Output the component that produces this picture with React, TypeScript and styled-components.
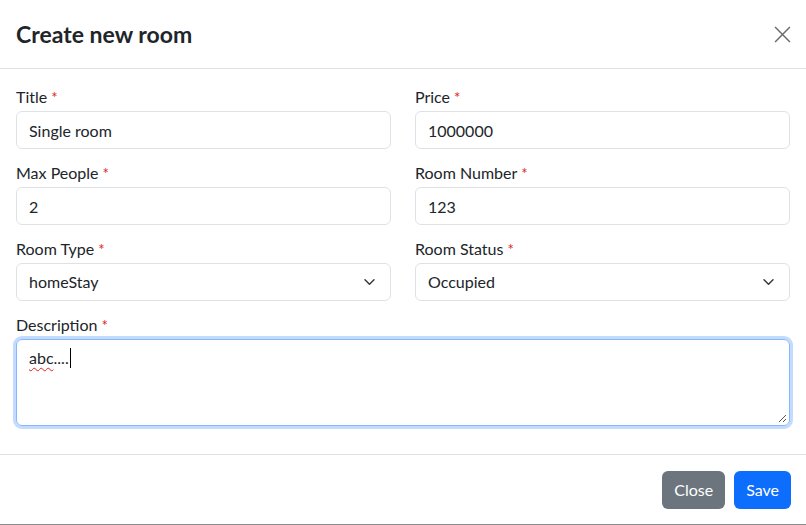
import React from "react";
import styled, { createGlobalStyle } from "styled-components";

const Global = createGlobalStyle`
  html, body { margin: 0; padding: 0; background: #fff; }
  body { font-family: Lato, "Open Sans", "Liberation Sans", sans-serif; color: #212529; }
  * { box-sizing: border-box; }
`;

const Modal = styled.div`
  width: 806px;
  height: 525px;
  background: #fff;
  border-bottom: 1px solid #8c8c8c;
  display: flex;
  flex-direction: column;
`;

const Header = styled.div`
  height: 69px;
  flex: none;
  padding: 0 15px 0 16px;
  border-bottom: 1px solid #dee2e6;
  display: flex;
  align-items: center;
  justify-content: space-between;
`;

const Title = styled.h5`
  margin: 0;
  font-size: 23px;
  font-weight: 700;
  line-height: 1.5;
  color: #212529;
  padding-top: 1px;
`;

const CloseX = styled.button`
  width: 18px;
  height: 18px;
  border: 0;
  background: transparent;
  padding: 0;
  display: flex;
  align-items: center;
  justify-content: center;
  cursor: pointer;
  margin-top: 1px;
`;

const Body = styled.div`
  flex: none;
  padding: 16px 16px 0 16px;
  display: grid;
  grid-template-columns: 1fr 1fr;
  align-content: start;
  column-gap: 24px;
  row-gap: 12px;
  height: 386px;
  border-bottom: 1px solid #dee2e6;
`;

const Group = styled.div<{ $full?: boolean }>`
  display: flex;
  flex-direction: column;
  grid-column: ${(p) => (p.$full ? "1 / -1" : "auto")};
`;

const Label = styled.label`
  font-size: 16px;
  line-height: 24px;
  margin-bottom: 2px;
  color: #212529;
`;

const Req = styled.span`
  color: #e02020;
  font-size: 15px;
  margin-left: 4px;
`;

const Input = styled.input`
  height: 38px;
  padding: 6px 12px;
  border: 1px solid #dee2e6;
  border-radius: 6px;
  font-family: inherit;
  font-size: 16px;
  color: #212529;
  background: #fff;
  outline: none;
`;

const SelectBox = styled.div`
  position: relative;
  height: 38px;
  padding: 6px 36px 6px 12px;
  border: 1px solid #dee2e6;
  border-radius: 6px;
  font-size: 16px;
  line-height: 24px;
  display: flex;
  align-items: center;
`;

const Chevron = styled.svg`
  position: absolute;
  right: 14px;
  top: 50%;
  margin-top: -6px;
`;

const TextArea = styled.div`
  position: relative;
  height: 87px;
  padding: 6px 12px;
  border: 1px solid #86b7fe;
  border-radius: 6px;
  box-shadow: 0 0 0 3px rgba(13, 110, 253, 0.25);
  font-size: 16px;
  line-height: 24px;
`;

const Misspelled = styled.span`
  text-decoration: underline wavy #e02020;
  text-decoration-thickness: 1px;
  text-underline-offset: 3px;
`;

const Caret = styled.span`
  display: inline-block;
  width: 1px;
  height: 20px;
  background: #000;
  vertical-align: -4px;
  margin-left: 1px;
`;

const Grip = styled.svg`
  position: absolute;
  right: 2px;
  bottom: 2px;
`;

const Footer = styled.div`
  flex: 1;
  display: flex;
  justify-content: flex-end;
  align-items: center;
  gap: 9px;
  padding: 0 15px 0 16px;
`;

const Button = styled.button<{ $variant: "primary" | "secondary" }>`
  height: 38px;
  padding: 6px 12px;
  border: 0;
  border-radius: 6px;
  font-family: inherit;
  font-size: 16px;
  color: #fff;
  background: ${(p) => (p.$variant === "primary" ? "#0d6efd" : "#6c757d")};
`;

const Field = ({ label, value, full }: { label: string; value: string; full?: boolean }) => (
  <Group $full={full}>
    <Label>
      {label}
      <Req>*</Req>
    </Label>
    <Input defaultValue={value} />
  </Group>
);

const SelectField = ({ label, value }: { label: string; value: string }) => (
  <Group>
    <Label>
      {label}
      <Req>*</Req>
    </Label>
    <SelectBox>
      {value}
      <Chevron width="13" height="12" viewBox="0 0 16 16">
        <path d="M2 5l6 6 6-6" fill="none" stroke="#343a40" strokeWidth="2" strokeLinecap="round" strokeLinejoin="round" />
      </Chevron>
    </SelectBox>
  </Group>
);

export default function App() {
  return (
    <>
      <Global />
      <Modal>
        <Header>
          <Title>Create new room</Title>
          <CloseX aria-label="Close">
            <svg width="17" height="17" viewBox="0 0 16 16">
              <path d="M1 1l14 14M15 1L1 15" stroke="#6b6b6b" strokeWidth="1.4" fill="none" />
            </svg>
          </CloseX>
        </Header>
        <Body>
          <Field label="Title" value="Single room" />
          <Field label="Price" value="1000000" />
          <Field label="Max People" value="2" />
          <Field label="Room Number" value="123" />
          <SelectField label="Room Type" value="homeStay" />
          <SelectField label="Room Status" value="Occupied" />
          <Group $full>
            <Label>
              Description
              <Req>*</Req>
            </Label>
            <TextArea role="textbox">
              <Misspelled>abc</Misspelled>....
              <Caret />
              <Grip width="10" height="10" viewBox="0 0 10 10">
                <path d="M9 2L2 9M9 6L6 9" stroke="#555" strokeWidth="1" />
              </Grip>
            </TextArea>
          </Group>
        </Body>
        <Footer>
          <Button $variant="secondary">Close</Button>
          <Button $variant="primary">Save</Button>
        </Footer>
      </Modal>
    </>
  );
}
